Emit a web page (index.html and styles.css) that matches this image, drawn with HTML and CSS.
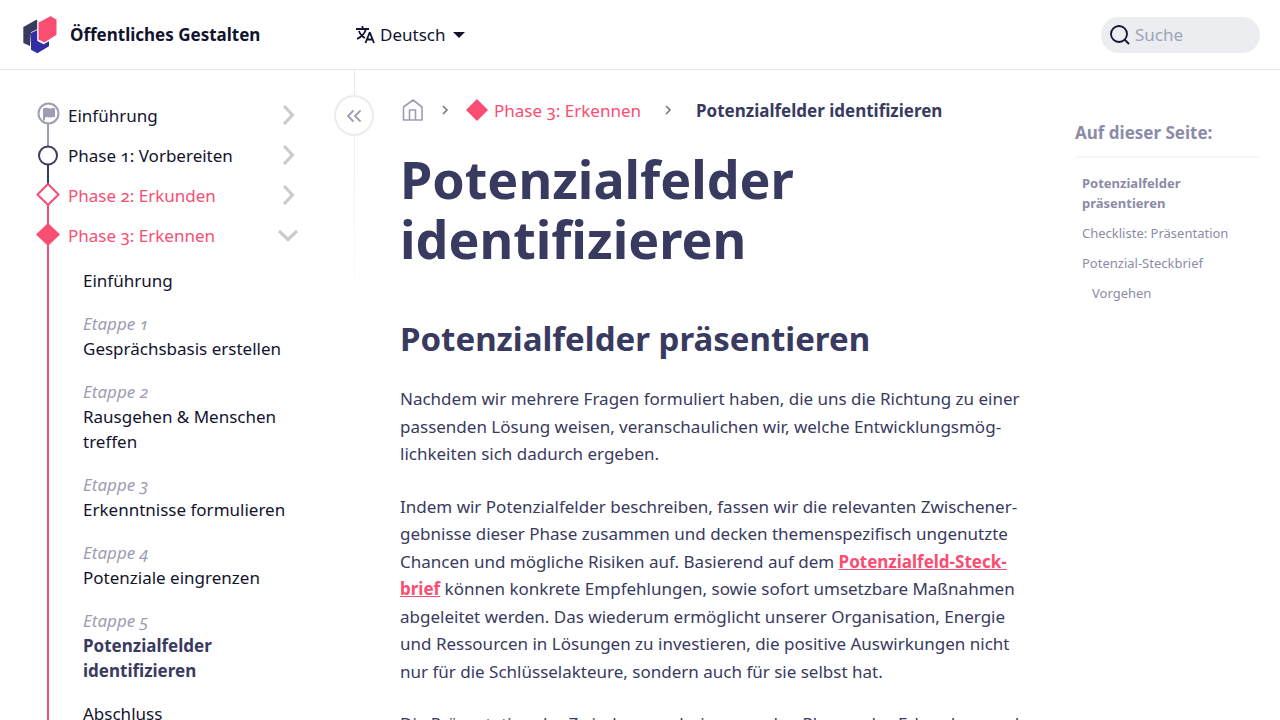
FILE: index.html
```html
<!DOCTYPE html>
<html lang="de">
<head>
<meta charset="utf-8">
<meta name="viewport" content="width=device-width, initial-scale=1">
<title>Potenzialfelder identifizieren – Öffentliches Gestalten</title>
<link rel="stylesheet" href="styles.css">
</head>
<body>
<header class="topbar">
  <a class="brand" href="#">
    <svg class="brand-logo" viewBox="66 44 108 120" aria-hidden="true">
      <path fill="#393a60" d="M70 80 109 58l3 3v26l-19 9-3 41-20-9z"/>
      <path fill="#322fa6" d="M93 98l19-9v33l19 10 16-9v15l-35 21-19-11z"/>
      <path fill="#f94d72" stroke="#fff" stroke-width="3" d="M114 66l38-20 19 11v47l-38 24-19-10z"/>
    </svg>
    <span>Öffentliches Gestalten</span>
  </a>
  <button class="language" type="button">
    <svg class="language-icon" viewBox="0 0 20 20" fill="none" stroke="currentColor" stroke-width="1.800" aria-hidden="true">
      <path d="M1 4h13M7.500 1v3M11 4c-1 4-5 8-9 10M4 6c1 3 4 6 6 7M10.500 18l4-10h.5l4 10M12 14.500h6"/>
    </svg>
    <span>Deutsch</span>
    <svg class="language-caret" viewBox="0 0 12 6" aria-hidden="true"><path fill="currentColor" d="M0 0h12L6 6z"/></svg>
  </button>
  <label class="search">
    <svg class="search-icon" viewBox="0 0 20 20" fill="none" stroke="#12132e" stroke-width="1.800" aria-hidden="true"><circle cx="9" cy="9" r="8"/><path d="M14.500 14.500L19 19"/></svg>
    <input class="search-input" type="search" placeholder="Suche" aria-label="Suche">
  </label>
</header>

<div class="layout">
  <nav class="sidebar" aria-label="Kapitel">
    <ul class="phases">
      <li>
        <a class="phase" href="#">
          <svg class="phase-mark" viewBox="0 0 24 40" fill="none" stroke="#9d9db4" stroke-width="2" aria-hidden="true"><path d="M12 29v11"/><circle cx="12.500" cy="18.500" r="10"/><path fill="#9d9db4" stroke="none" d="M7 13.500c3-1.500 5 0 7 0 2 0 3-1 5 0v9c-2-1-3 0-5 0s-3-1-5 0v3H7z"/></svg>
          <span class="phase-name">Einführung</span>
          <svg class="chevron" viewBox="0 0 20 20" fill="none" stroke="#ccc" stroke-width="3.200" aria-hidden="true"><path d="M6 1l8.500 9L6 19"/></svg>
        </a>
      </li>
      <li>
        <a class="phase" href="#">
          <svg class="phase-mark" viewBox="0 0 24 40" fill="none" stroke="#393a60" stroke-width="2" aria-hidden="true"><path stroke="#9d9db4" d="M12 0v11"/><path d="M12 30v10"/><circle cx="12" cy="20.500" r="9"/></svg>
          <span class="phase-name">Phase 1: Vorbereiten</span>
          <svg class="chevron" viewBox="0 0 20 20" fill="none" stroke="#ccc" stroke-width="3.200" aria-hidden="true"><path d="M6 1l8.500 9L6 19"/></svg>
        </a>
      </li>
      <li>
        <a class="phase phase-pink" href="#">
          <svg class="phase-mark" viewBox="0 0 24 40" fill="none" stroke="#f94d72" stroke-width="2" aria-hidden="true"><path stroke="#393a60" d="M12 0v9"/><path d="M12 29v11M12 9l10.500 10.500L12 30 1.500 19.500z"/></svg>
          <span class="phase-name">Phase 2: Erkunden</span>
          <svg class="chevron" viewBox="0 0 20 20" fill="none" stroke="#ccc" stroke-width="3.200" aria-hidden="true"><path d="M6 1l8.500 9L6 19"/></svg>
        </a>
      </li>
      <li>
        <a class="phase phase-pink" href="#">
          <svg class="phase-mark" viewBox="0 0 24 40" aria-hidden="true"><path stroke="#f94d72" stroke-width="2" d="M12 0v40"/><path fill="#f94d72" d="M12 8l12 11.500L12 31 0 19.500z"/></svg>
          <span class="phase-name">Phase 3: Erkennen</span>
          <svg class="chevron" viewBox="0 0 20 20" fill="none" stroke="#ccc" stroke-width="3.200" aria-hidden="true"><path d="M1 6l9 8.500L19 6"/></svg>
        </a>
        <ul class="steps">
          <li><a href="#">Einführung</a></li>
          <li><a href="#"><em>Etappe 1</em>Gesprächsbasis erstellen</a></li>
          <li><a href="#"><em>Etappe 2</em>Rausgehen &amp; Menschen treffen</a></li>
          <li><a href="#"><em>Etappe 3</em>Erkenntnisse formulieren</a></li>
          <li><a href="#"><em>Etappe 4</em>Potenziale eingrenzen</a></li>
          <li><a class="current" href="#" aria-current="page"><em>Etappe 5</em>Potenzialfelder identifizieren</a></li>
          <li><a href="#">Abschluss</a></li>
        </ul>
      </li>
    </ul>
    <button class="collapse" type="button" aria-label="Seitenleiste einklappen">
      <svg class="collapse-icon" viewBox="0 0 16 14" fill="none" stroke="#9d9db4" stroke-width="1.800" stroke-linecap="round" aria-hidden="true"><path d="M7 2L2 7l5 5M14 2L9 7l5 5"/></svg>
    </button>
  </nav>

  <main class="content">
    <nav class="crumbs" aria-label="Brotkrumen">
      <a class="crumb-home" href="#" aria-label="Startseite">
        <svg class="home-icon" viewBox="0 0 22 22" fill="none" stroke="#9d9db4" stroke-width="1.600" stroke-linejoin="round" aria-hidden="true"><path d="M1.500 8L11 1l9 7v13h-18.500zM7.500 21V11h6v10"/></svg>
      </a>
      <svg class="crumb-sep" viewBox="0 0 8 10" fill="none" stroke="#777" stroke-width="1.600" aria-hidden="true"><path d="M2 1l4 4-4 4"/></svg>
      <a class="crumb-phase" href="#">
        <svg class="crumb-diamond" viewBox="0 0 22 22" aria-hidden="true"><path fill="#f94d72" d="M11 0l11 11-11 11L0 11z"/></svg>
        <span>Phase 3: Erkennen</span>
      </a>
      <svg class="crumb-sep" viewBox="0 0 8 10" fill="none" stroke="#777" stroke-width="1.600" aria-hidden="true"><path d="M2 1l4 4-4 4"/></svg>
      <span class="crumb-current">Potenzialfelder identifizieren</span>
    </nav>
    <article class="article">
      <h1>Potenzialfelder identifizieren</h1>
      <h2>Potenzialfelder präsentieren</h2>
      <p>Nachdem wir mehrere Fragen formuliert haben, die uns die Richtung zu einer passenden Lösung weisen, veranschaulichen wir, welche Entwicklungsmög&shy;lichkeiten sich dadurch ergeben.</p>
      <p>Indem wir Potenzialfelder beschreiben, fassen wir die relevanten Zwischener&shy;gebnisse dieser Phase zusammen und decken themenspezifisch ungenutzte Chancen und mögliche Risiken auf. Basierend auf dem <a href="#">Potenzialfeld-Steck&shy;brief</a> können konkrete Empfehlungen, sowie sofort umsetzbare Maßnahmen abgeleitet werden. Das wiederum ermöglicht unserer Organisation, Energie und Ressourcen in Lösungen zu investieren, die positive Auswirkungen nicht nur für die Schlüsselakteure, sondern auch für sie selbst hat.</p>
      <p>Die Präsentation der Zwischenergebnisse aus den Phasen des Erkundens und</p>
    </article>
  </main>

  <aside class="toc" aria-labelledby="toc-title">
    <h2 class="toc-title" id="toc-title">Auf dieser Seite:</h2>
    <ul class="toc-list">
      <li><a class="toc-active" href="#">Potenzialfelder präsentieren</a></li>
      <li><a href="#">Checkliste: Präsentation</a></li>
      <li><a href="#">Potenzial-Steckbrief</a></li>
      <li class="toc-sub"><a href="#">Vorgehen</a></li>
    </ul>
  </aside>
</div>
</body>
</html>
```
FILE: styles.css
```css
* { box-sizing: border-box; }

body {
  margin: 0;
  min-height: 100vh;
  display: flex;
  flex-direction: column;
  background: #fff;
  color: #12132e;
  font-family: "Noto Sans", "Open Sans", sans-serif;
  font-size: 17px;
  line-height: 25px;
  font-variant-numeric: oldstyle-nums;
}

a { color: inherit; text-decoration: none; }
ul { margin: 0; padding: 0; list-style: none; }
svg { display: block; flex: none; }
button, input { font: inherit; color: inherit; }

.topbar {
  flex: none;
  display: grid;
  grid-template-columns: 355px 1fr auto;
  align-items: center;
  height: 70px;
  padding: 0 20px 0 0;
  border-bottom: 1px solid #e8e8ec;
}
.brand {
  display: flex;
  align-items: center;
  gap: 12px;
  padding-left: 22px;
  font-weight: 700;
}
.brand-logo { width: 36px; height: 40px; }
.language {
  justify-self: start;
  display: flex;
  align-items: center;
  gap: 5px;
  padding: 0;
  border: 0;
  background: none;
}
.language-icon { width: 20px; height: 20px; }
.language-caret { width: 12px; height: 6px; margin-left: 3px; }
.search {
  display: flex;
  align-items: center;
  gap: 5px;
  width: 159px;
  height: 36px;
  padding: 0 9px;
  border-radius: 18px;
  background: #ebedf0;
}
.search-icon { width: 20px; height: 20px; }
.search-input {
  flex: 1;
  min-width: 0;
  padding: 0;
  border: 0;
  outline: 0;
  background: none;
}
.search-input::placeholder { color: #9aa5b8; opacity: 1; }

.layout {
  flex: 1;
  display: grid;
  grid-template-columns: 355px minmax(0, 1fr) 205px;
}

.sidebar {
  position: relative;
  padding: 25px 57px 0 36px;
  background: linear-gradient(#e8e8ec, #fff) right top / 1px 250px no-repeat;
}
.phase { display: flex; align-items: center; height: 40px; }
.phase-mark { width: 24px; height: 40px; }
.phase-name { flex: 1; margin-left: 8px; white-space: nowrap; }
.phase-pink { color: #f94d72; }
.chevron { width: 20px; height: 20px; }
.steps {
  display: flex;
  flex-direction: column;
  gap: 18px;
  margin-left: 11px;
  padding: 13px 0 20px 34px;
  border-left: 2px solid #f94d72;
}
.steps a { display: block; }
.steps em { display: block; color: #9d9db4; }
.steps .current { color: #393a60; font-weight: 700; }
.steps .current em { font-weight: 400; }
.collapse {
  position: absolute;
  top: 25px;
  right: -19px;
  display: grid;
  place-items: center;
  width: 40px;
  height: 41px;
  padding: 0;
  border: 2px solid #ececf0;
  border-radius: 50%;
  background: #fff;
}
.collapse-icon { width: 16px; height: 14px; }

.content { padding: 25px 45px 0 45px; color: #393a60; }
.crumbs { display: flex; align-items: center; height: 30px; padding-left: 2px; }
.home-icon, .crumb-diamond { width: 22px; height: 22px; }
.crumb-sep { width: 8px; height: 10px; margin: 0 17px; }
.crumb-phase { display: flex; align-items: center; gap: 6px; margin-right: 6px; color: #f94d72; }
.crumb-current { margin-left: 7px; font-weight: 700; }

.article h1 {
  margin: 24px 0 0;
  font-size: 52px;
  line-height: 60px;
}
.article h2 {
  margin: 50px 0 26px;
  font-size: 33px;
  line-height: 40px;
}
.article p { margin: 0 0 25px; line-height: 1.62; }
.article a { color: #f94d72; font-weight: 700; text-decoration: underline; }

.toc { padding: 50px 20px 0 0; color: #8b8ba7; }
.toc-title {
  margin: 0;
  padding-bottom: 11px;
  border-bottom: 2px solid #f7f7f9;
  font-size: 17px;
  line-height: 25px;
}
.toc-list {
  display: flex;
  flex-direction: column;
  gap: 10px;
  padding: 15px 0 0 7px;
  font-size: 13px;
  line-height: 20px;
}
.toc-active { display: block; font-weight: 700; }
.toc-sub { padding-left: 10px; }
```
